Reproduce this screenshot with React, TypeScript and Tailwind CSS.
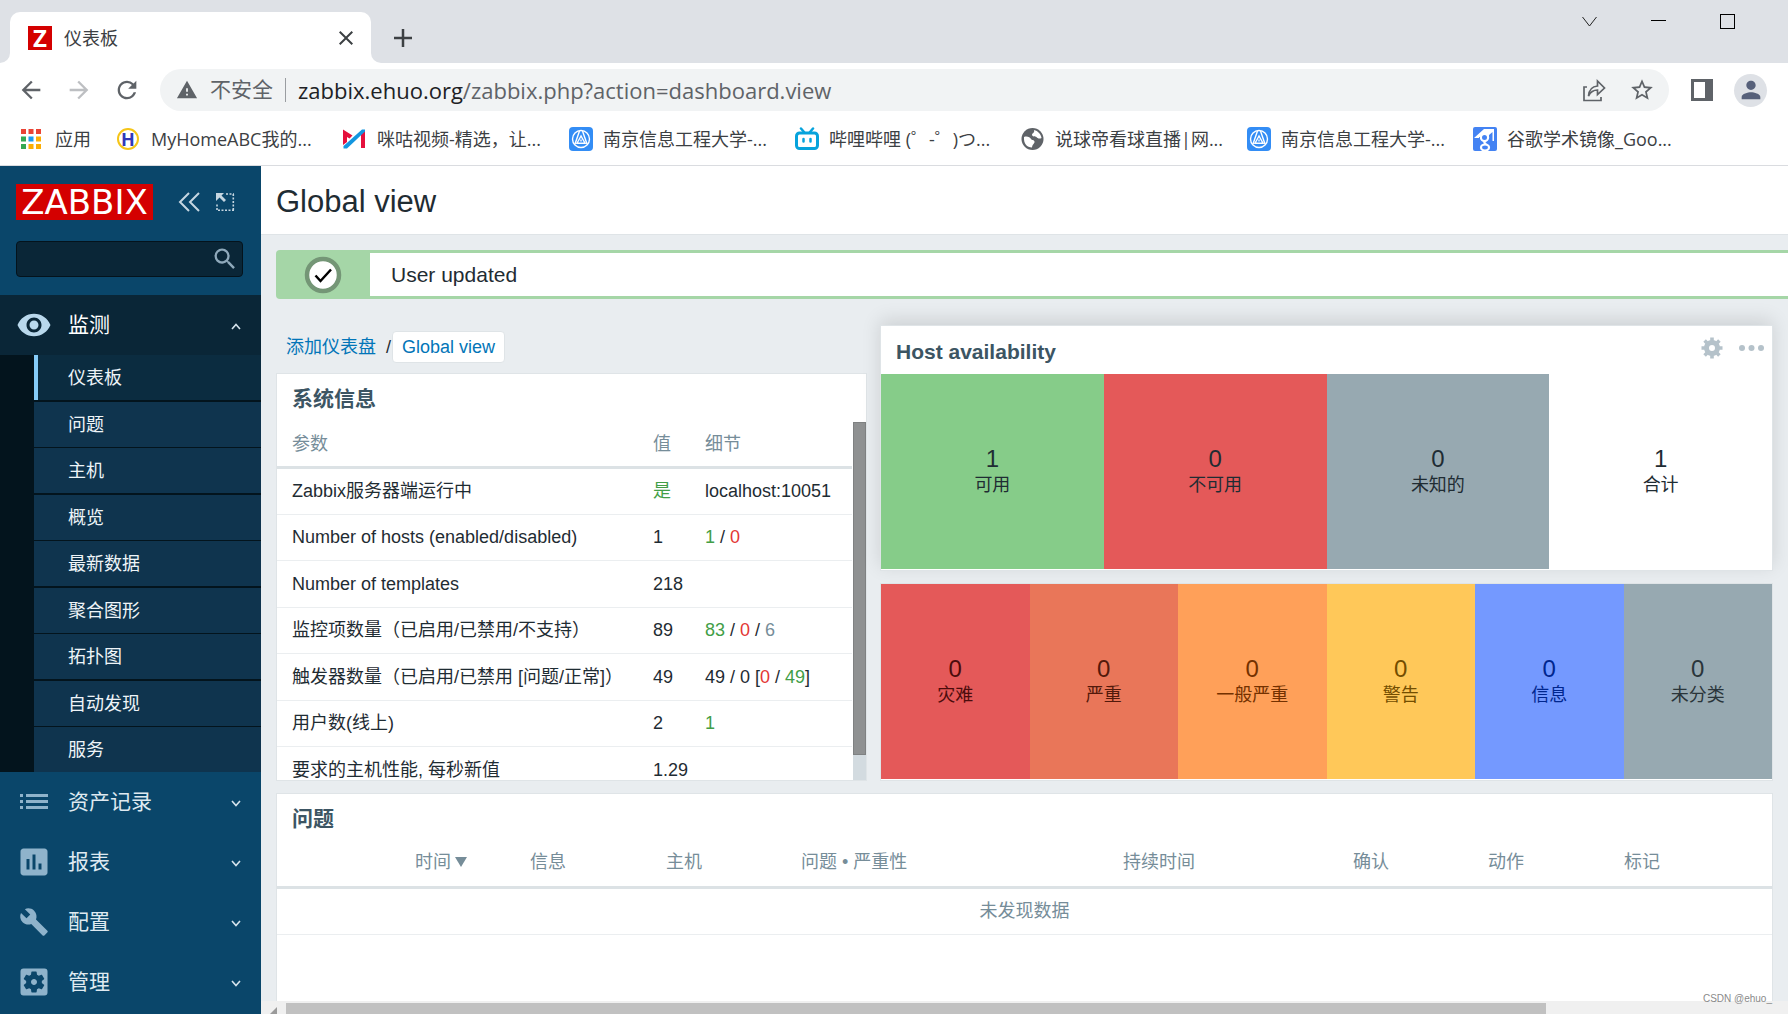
import type { ReactNode } from "react";
import {
  MdArrowBack,
  MdArrowForward,
  MdAssessment,
  MdBuild,
  MdClose,
  MdPerson,
  MdRefresh,
  MdSearch,
  MdSettingsApplications,
  MdStarBorder,
  MdVisibility,
  MdWarning,
} from "react-icons/md";

const subItems = [
  { label: "问题", border: "border-t-2" },
  { label: "主机", border: "border-t" },
  { label: "概览", border: "border-t-2" },
  { label: "最新数据", border: "border-t" },
  { label: "聚合图形", border: "border-t-2" },
  { label: "拓扑图", border: "border-t" },
  { label: "自动发现", border: "border-t-2" },
  { label: "服务", border: "border-t" },
];

const hostTiles = [
  { count: 1, label: "可用", color: "bg-[#86cc89]" },
  { count: 0, label: "不可用", color: "bg-[#e45959]" },
  { count: 0, label: "未知的", color: "bg-[#97a9b1]" },
  { count: 1, label: "合计", color: "bg-white" },
];

const severityTiles = [
  { label: "灾难", color: "bg-[#e45959] text-[#4b0c0c]" },
  { label: "严重", color: "bg-[#e97659] text-[#52190b]" },
  { label: "一般严重", color: "bg-[#ffa059] text-[#733100]" },
  { label: "警告", color: "bg-[#ffc859] text-[#734d00]" },
  { label: "信息", color: "bg-[#7499ff] text-[#00268e]" },
  { label: "未分类", color: "bg-[#97a9b1] text-[#2a353a]" },
];

const green = "text-[#429e47]";
const red = "text-[#e33734]";
const grey = "text-[#768d99]";

const systemRows: { name: string; value: ReactNode; details: ReactNode; height: string }[] = [
  {
    name: "Zabbix服务器端运行中",
    value: <span className={green}>是</span>,
    details: "localhost:10051",
    height: "h-[47px]",
  },
  {
    name: "Number of hosts (enabled/disabled)",
    value: "1",
    details: (
      <>
        <span className={green}>1</span> / <span className={red}>0</span>
      </>
    ),
    height: "h-[46px]",
  },
  { name: "Number of templates", value: "218", details: "", height: "h-[47px]" },
  {
    name: "监控项数量（已启用/已禁用/不支持）",
    value: "89",
    details: (
      <>
        <span className={green}>83</span> / <span className={red}>0</span> /{" "}
        <span className={grey}>6</span>
      </>
    ),
    height: "h-[46px]",
  },
  {
    name: "触发器数量（已启用/已禁用 [问题/正常]）",
    value: "49",
    details: (
      <>
        49 / 0 [<span className={red}>0</span> / <span className={green}>49</span>]
      </>
    ),
    height: "h-[47px]",
  },
  {
    name: "用户数(线上)",
    value: "2",
    details: <span className={green}>1</span>,
    height: "h-[46px]",
  },
  { name: "要求的主机性能, 每秒新值", value: "1.29", details: "", height: "h-[47px]" },
];

const problemColumns = [
  { label: "信息", width: "w-[136px]" },
  { label: "主机", width: "w-[135px]" },
  { label: "问题 • 严重性", width: "w-[322px]" },
  { label: "持续时间", width: "w-[230px]" },
  { label: "确认", width: "w-[135px]" },
  { label: "动作", width: "w-[136px]" },
  { label: "标记", width: "w-[156px]" },
];

function UniversityIcon() {
  return (
    <svg viewBox="0 0 24 24" className="size-6">
      <rect width="24" height="24" rx="4" fill="#338df5" />
      <g fill="none" stroke="#fff" strokeWidth="1.4">
        <circle cx="12" cy="12" r="8.5" />
        <path d="M10.5 4 6 17M13.500 4 18 17M12 9l-4 7.200h8z" />
        <path d="M12 12.500v2" />
      </g>
    </svg>
  );
}

function AppsIcon() {
  const colors = ["#ea4335", "#ea4335", "#ea4335", "#34a853", "#1a9bf0", "#fbae05", "#34a853", "#fbae05", "#fbae05"];
  return (
    <svg viewBox="0 0 20 20" className="size-5">
      {colors.map((c, i) => (
        <rect key={i} x={(i % 3) * 7.5} y={Math.floor(i / 3) * 7.5} width="5" height="5" fill={c} />
      ))}
    </svg>
  );
}

function GearIcon() {
  return (
    <svg viewBox="0 0 22 22" className="size-[22px]" stroke="#b5c2ca" fill="none">
      <circle cx="11" cy="11" r="5.500" strokeWidth="5" />
      <path
        d="M11 .5V4M11 18v3.500M.5 11H4M18 11h3.500M3.600 3.600l2.400 2.400M16 16l2.400 2.400M18.400 3.600 16 6M6 16l-2.400 2.400"
        strokeWidth="3.600"
      />
    </svg>
  );
}

const bookmarks = [
  {
    label: "MyHomeABC我的...",
    icon: (
      <span className="mr-[2px] flex size-[22px] items-center justify-center rounded-full border-2 border-[#f5c518] text-lg leading-none font-bold text-[#3038b8]">
        H
      </span>
    ),
  },
  {
    label: "咪咕视频-精选，让...",
    icon: (
      <svg viewBox="0 0 24 24" className="size-6">
        <path d="M0 2.500l9.500 6-3 3L4 10v5l-4 3z" fill="#e5103c" />
        <path d="M18 7l4-4v18h-4z" fill="#e5103c" />
        <path d="M.5 19 19 2.500h3V4.500L4 21.500H.5z" fill="#1296e0" />
      </svg>
    ),
  },
  { label: "南京信息工程大学-...", icon: <UniversityIcon /> },
  {
    label: "哔哩哔哩 (゜-゜)つ...",
    icon: (
      <svg viewBox="0 0 24 24" className="size-6" fill="none" stroke="#06a3dc" strokeWidth="3">
        <rect x="1.500" y="6" width="21" height="15.500" rx="3" />
        <path d="M6 1.500 9 5M18 1.500 15 5M8.500 12v2.500M15.500 12v2.500" strokeLinecap="round" strokeWidth="2.500" />
      </svg>
    ),
  },
  {
    label: "说球帝看球直播|网...",
    icon: (
      <svg viewBox="0 0 24 24" className="size-6">
        <circle cx="11.500" cy="12" r="11" fill="#5f6368" />
        <path
          d="M3 10c3-1 6 0 7 2 1 1.500 3 .5 3.500 2.500.4 2-2 2.500-2.500 6-5 0-8.500-4-8-10.500z"
          fill="#fff"
        />
        <path d="M13 3c4 1 7 4 7.500 8-2 1-4 .5-5-1-1.500-1-4 0-4.500-2 0-2 3-2 2-5z" fill="#fff" />
      </svg>
    ),
  },
  { label: "南京信息工程大学-...", icon: <UniversityIcon /> },
  {
    label: "谷歌学术镜像_Goo...",
    icon: (
      <svg viewBox="0 0 24 24" className="size-6">
        <rect width="24" height="24" rx="2" fill="#4483f3" />
        <path d="M1 11 11 2h10v12h-1.500V5L16 8v2H6v1z" fill="#fff" />
        <g stroke="#fff" strokeWidth="2.200" fill="#4483f3">
          <circle cx="11.500" cy="10.500" r="3.600" />
          <path d="M13 14c-2.500 1-2 2.500 1 4" fill="none" />
          <ellipse cx="12" cy="20.500" rx="4" ry="3" />
        </g>
      </svg>
    ),
  },
];

function TabStrip() {
  return (
    <div className="flex h-[63px] shrink-0 bg-[#dee1e6]">
      <div className="size-[10px] self-end bg-white">
        <div className="size-full rounded-br-[10px] bg-[#dee1e6]" />
      </div>
      <div className="mt-3 flex w-[361px] items-center rounded-t-[10px] bg-white pr-[13px] pl-[18px] text-[#3c4043]">
        <span className="flex size-6 items-center justify-center bg-[#d40000] text-2xl leading-6 font-bold text-white">
          Z
        </span>
        <span className="ml-3 flex-1 text-lg">仪表板</span>
        <button type="button" aria-label="关闭标签页">
          <MdClose className="size-6" />
        </button>
      </div>
      <div className="size-[10px] self-end bg-white">
        <div className="size-full rounded-bl-[10px] bg-[#dee1e6]" />
      </div>
      <button type="button" aria-label="新标签页" className="mt-3 ml-3">
        <svg viewBox="0 0 20 20" className="size-5" stroke="#3c4043" strokeWidth="2.500">
          <path d="M10 1v18M1 10h18" />
        </svg>
      </button>
      <div className="ml-auto flex h-[42px] items-center gap-[54px] pr-[53px]">
        <button type="button" aria-label="搜索标签页">
          <svg viewBox="0 0 15 15" className="size-[15px]" fill="none" stroke="#222">
            <path d="M.5 3 7.500 12l7-9" />
          </svg>
        </button>
        <button type="button" aria-label="最小化">
          <svg viewBox="0 0 15 15" className="size-[15px]" stroke="#000">
            <path d="M0 6.500h15" />
          </svg>
        </button>
        <button type="button" aria-label="最大化">
          <svg viewBox="0 0 15 15" className="size-[15px]" fill="none" stroke="#000">
            <rect x=".5" y=".5" width="14" height="14" />
          </svg>
        </button>
      </div>
    </div>
  );
}

function Toolbar() {
  return (
    <div className="flex h-[54px] shrink-0 items-center bg-white pr-[21px] pl-[17px] text-[#5f6368]">
      <button type="button" aria-label="后退">
        <MdArrowBack className="size-7" />
      </button>
      <button type="button" aria-label="前进" className="ml-5 text-[#bdbfc2]">
        <MdArrowForward className="size-7" />
      </button>
      <button type="button" aria-label="重新加载" className="ml-5">
        <MdRefresh className="size-7" />
      </button>
      <div className="ml-[19px] flex h-[42px] flex-1 items-center rounded-full bg-[#f1f3f4] pr-[14px] pl-4">
        <MdWarning className="size-[22px]" />
        <span className="ml-3 text-[21px]">不安全</span>
        <span className="mx-3 h-6 w-px bg-[#9a9da1]" />
        <div className="relative min-w-0 flex-1 text-[22px] leading-7">
          <input
            type="text"
            aria-label="地址"
            defaultValue="zabbix.ehuo.org/zabbix.php?action=dashboard.view"
            className="absolute inset-0 w-full bg-transparent text-transparent outline-none"
          />
          {/* host is drawn darker than the path */}
          <div className="pointer-events-none truncate">
            <span className="text-[#202124]">zabbix.ehuo.org</span>
            /zabbix.php?action=dashboard.view
          </div>
        </div>
        <button type="button" aria-label="分享">
          <svg viewBox="0 0 26 26" className="size-[26px]" fill="none" stroke="#5f6368" strokeWidth="1.700">
            <path d="M6 10H3v13.500h17V20" />
            <path d="M7.500 19c.5-5.500 3-9.500 9-10V4l7 7-7 6.500V13c-4 0-7 2-9 6z" />
          </svg>
        </button>
        <button type="button" aria-label="收藏" className="ml-[22px]">
          <MdStarBorder className="size-[26px]" />
        </button>
      </div>
      <button type="button" aria-label="侧边栏" className="ml-[22px]">
        <svg viewBox="0 0 22 22" className="size-[22px]">
          <path d="M0 0h22v22H0zM3 3v16h11V3z" fill="#5f6368" fillRule="evenodd" />
        </svg>
      </button>
      <button
        type="button"
        aria-label="用户"
        className="ml-[21px] flex size-[33px] items-center justify-center rounded-full bg-[#dee1e6] text-[#56607a]"
      >
        <MdPerson className="size-[28px]" />
      </button>
    </div>
  );
}

function Bookmarks() {
  return (
    <nav className="flex h-[49px] shrink-0 items-center overflow-hidden border-b border-[#dadce0] bg-white pb-1 pl-[21px] text-lg whitespace-nowrap text-[#3c4043]">
      <a href="#apps" className="flex w-24 shrink-0 items-center gap-[14px]">
        <AppsIcon />
        应用
      </a>
      {bookmarks.map((b, i) => (
        <a key={i} href="#bookmark" className="flex w-[226px] shrink-0 items-center gap-[10px]">
          {b.icon}
          <span>{b.label}</span>
        </a>
      ))}
    </nav>
  );
}

function Chevron({ up = false }: { up?: boolean }) {
  return (
    <svg viewBox="0 0 10 10" className="ml-auto size-[10px]" fill="none" stroke="#d5e3ec" strokeWidth="1.600">
      <path d={up ? "M1 9l4-4.500L9 9" : "M1 4l4 4.500L9 4"} />
    </svg>
  );
}

function MenuItem({ icon, label }: { icon: ReactNode; label: string }) {
  return (
    <button type="button" className="flex h-[60px] w-full items-center pr-5 text-[21px] text-[#dfeaf1]">
      <span className="flex w-[68px] justify-center text-[#8fb3cb]">{icon}</span>
      {label}
      <Chevron />
    </button>
  );
}

function Sidebar() {
  return (
    <aside className="w-[261px] shrink-0 overflow-hidden bg-[#0a466a]">
      <div className="h-[129px] px-4 pt-[18px]">
        <div className="flex items-center">
          <a
            href="#home"
            className="flex h-9 w-[137px] items-center justify-center bg-[#d40000] font-['DejaVu_Sans'] text-[34px] leading-9 text-white"
          >
            ZABBIX
          </a>
          <button type="button" aria-label="收起" className="ml-6">
            <svg viewBox="0 0 24 20" className="h-5 w-6" fill="none" stroke="#c5d6e1" strokeWidth="2">
              <path d="M12 1 3 10l9 9M22 1l-9 9 9 9" />
            </svg>
          </button>
          <button type="button" aria-label="隐藏" className="ml-[14px]">
            <svg viewBox="0 0 20 20" className="size-5" fill="none" stroke="#c5d6e1" strokeWidth="1.600">
              <path d="M11 2h8M18.300 2v17M19 18.300H2M2 18V11" strokeDasharray="2 1.500" />
              <path d="M1 1h8L6.500 3.500l4.500 4.500-2 2-4.500-4.500L1 9z" fill="#c5d6e1" stroke="none" />
            </svg>
          </button>
        </div>
        <form className="mt-[21px] flex h-9 w-[227px] items-center rounded-sm border border-[#04131c] bg-[#0a2637] pr-[3px]">
          <input
            type="text"
            aria-label="搜索"
            className="min-w-0 flex-1 bg-transparent px-2 text-lg text-white outline-none"
          />
          <button type="button" aria-label="开始搜索" className="text-[#8fa9bb]">
            <MdSearch className="size-7" />
          </button>
        </form>
      </div>

      <button type="button" className="flex h-[60px] w-full items-center bg-[#0a2637] pr-5 text-[21px] text-white">
        <span className="flex w-[68px] justify-center text-[#b9d8ec]">
          <MdVisibility className="size-9" />
        </span>
        监测
        <Chevron up />
      </button>
      <ul className="bg-[#03141d] pl-[34px] text-lg text-[#eef4f8]">
        <li>
          <a
            href="#dashboard"
            className="flex h-[45px] items-center border-l-4 border-[#86ccf8] bg-[#0b2c40] pb-[2px] pl-[30px]"
          >
            仪表板
          </a>
        </li>
        {subItems.map((item) => (
          <li key={item.label} className={`border-[#03141d] ${item.border}`}>
            <a href="#item" className="flex h-[45px] items-center bg-[#0f344e] pb-[2px] pl-[34px]">
              {item.label}
            </a>
          </li>
        ))}
      </ul>
      <MenuItem
        label="资产记录"
        icon={
          <svg viewBox="0 0 28 18" className="h-[18px] w-7" fill="currentColor">
            <path d="M0 1h3v3H0zM6 1h22v3H6zM0 7h3v3H0zM6 7h22v3H6zM0 13h3v3H0zM6 13h22v3H6z" />
          </svg>
        }
      />
      <MenuItem label="报表" icon={<MdAssessment className="size-9" />} />
      <MenuItem label="配置" icon={<MdBuild className="size-[30px]" />} />
      <MenuItem label="管理" icon={<MdSettingsApplications className="size-9" />} />
    </aside>
  );
}

function Tile({ count, label, color }: { count: number; label: string; color: string }) {
  return (
    <a href="#tile" className={`flex flex-1 flex-col items-center justify-center ${color}`}>
      <span className="text-2xl leading-[26px]">{count}</span>
      <span className="text-lg leading-[26px]">{label}</span>
    </a>
  );
}

function SystemInfo() {
  return (
    <section className="flex h-[408px] flex-col overflow-hidden border border-[#dfe4e7] bg-white">
      <h4 className="h-12 shrink-0 px-[15px] text-[21px] leading-[50px] font-bold text-[#3c5563]">系统信息</h4>
      <div className="flex min-h-0 flex-1">
        <div className="mr-px flex-1 overflow-hidden">
          <table className="w-full table-fixed text-left whitespace-nowrap">
            <thead>
              <tr className="h-[45px] border-b-[3px] border-[#dce2e5] text-[#768d99]">
                <th className="w-[368px] pl-[15px] font-normal">参数</th>
                <th className="w-[52px] pl-2 font-normal">值</th>
                <th className="pl-2 font-normal">细节</th>
              </tr>
            </thead>
            <tbody>
              {systemRows.map((row) => (
                <tr key={row.name} className={`border-b border-[#ebeef0] ${row.height}`}>
                  <td className="pl-[15px]">{row.name}</td>
                  <td className="pl-2">{row.value}</td>
                  <td className="pl-2">{row.details}</td>
                </tr>
              ))}
            </tbody>
          </table>
        </div>
        <div className="w-[13px] bg-[#d3dbe0]">
          <div className="h-[333px] border border-[#7f8182] bg-[#8f9192]" />
        </div>
      </div>
    </section>
  );
}

function Problems() {
  return (
    <section className="mx-[15px] mt-3 min-h-0 flex-1 overflow-hidden border border-b-0 border-[#dfe4e7] bg-white">
      <h4 className="h-[45px] px-[15px] text-[21px] leading-[50px] font-bold text-[#3c5563]">问题</h4>
      <table className="w-full table-fixed text-left whitespace-nowrap text-[#768d99]">
        <thead>
          <tr className="h-12 border-b-[3px] border-[#dce2e5]">
            <td className="w-[130px]" />
            <th className="w-[115px] pl-2 font-normal">
              <span className="flex items-center gap-1">
                时间
                <svg viewBox="0 0 12 10" className="h-[10px] w-3" fill="currentColor">
                  <path d="M0 0h12L6 10z" />
                </svg>
              </span>
            </th>
            {problemColumns.map((col) => (
              <th key={col.label} className={`pl-2 font-normal ${col.width}`}>
                {col.label}
              </th>
            ))}
          </tr>
        </thead>
        <tbody>
          <tr className="h-[47px] border-b border-[#ebeef0]">
            <td colSpan={9} className="text-center">
              未发现数据
            </td>
          </tr>
        </tbody>
      </table>
    </section>
  );
}

function Dashboard() {
  return (
    <main className="flex min-w-0 flex-1 flex-col overflow-hidden bg-[#e9edf0] font-['Liberation_Sans','Noto_Sans_CJK_SC',sans-serif] text-lg leading-6 text-[#1f2c33]">
      <header className="h-[69px] shrink-0 border-b border-[#dfe4e7] bg-white px-[15px]">
        <h1 className="text-[31px] leading-[72px]">Global view</h1>
      </header>

      <div className="mt-[15px] ml-[15px] flex h-[49px] shrink-0 rounded-l-sm border-3 border-r-0 border-[#a5d6a7] bg-white text-[21px]">
        <div className="flex w-[91px] items-center justify-center bg-[#a5d6a7] pr-[3px]">
          <svg viewBox="0 0 38 38" className="size-[38px]">
            <circle cx="19" cy="19" r="16" fill="#fff" stroke="#749676" strokeWidth="4.500" />
            <path d="M11.500 19.500l5 5.500L27 13.500" fill="none" stroke="#000" strokeWidth="2.500" />
          </svg>
        </div>
        <span className="self-center pl-[21px]">User updated</span>
      </div>

      <div className="mx-[15px] mt-[26px] grid shrink-0 grid-cols-[591fr_893fr] gap-x-[13px]">
        <div className="flex min-w-0 flex-col pt-[6px]">
          <nav className="mb-[10px] flex h-8 items-center pl-[10px] text-[#0275b8]">
            <a href="#dashboards">添加仪表盘</a>
            <span className="ml-[10px] text-[#1f2c33]">/</span>
            <a
              href="#global"
              className="ml-px flex h-8 items-center rounded-sm border border-[#dfe4e7] bg-white px-[9px]"
            >
              Global view
            </a>
          </nav>
          <SystemInfo />
        </div>

        <div className="flex min-w-0 flex-col gap-3">
          <section className="flex flex-1 flex-col border border-[#dfe4e7] bg-white shadow-[0_-5px_18px_rgba(0,0,0,0.12)]">
            <div className="flex h-12 items-center pr-2 pl-[15px]">
              <h4 className="flex-1 pt-1 text-[21px] font-bold text-[#3c5563]">Host availability</h4>
              <div className="flex items-center gap-4 pb-[5px]">
                <button type="button" aria-label="编辑">
                  <GearIcon />
                </button>
                <button type="button" aria-label="动作">
                  <svg viewBox="0 0 25 6" className="h-[6px] w-[25px]" fill="#b5c2ca">
                    <circle cx="3" cy="3" r="3" />
                    <circle cx="12.500" cy="3" r="3" />
                    <circle cx="22" cy="3" r="3" />
                  </svg>
                </button>
              </div>
            </div>
            <div className="mb-px flex flex-1">
              {hostTiles.map((t) => (
                <Tile key={t.label} {...t} />
              ))}
            </div>
          </section>
          <section className="flex h-[198px] border border-[#dfe4e7] bg-white pb-px">
            {severityTiles.map((t) => (
              <Tile key={t.label} count={0} {...t} />
            ))}
          </section>
        </div>
      </div>

      <Problems />

      <div className="flex h-[13px] shrink-0 items-end bg-[#f0f0f0] pl-[9px]">
        <svg viewBox="0 0 7 7" className="size-[7px]">
          <path d="M7 0v7H0z" fill="#9a9a9a" />
        </svg>
        <div className="ml-[9px] h-[11px] w-[83%] bg-[#c1c1c1]" />
      </div>
    </main>
  );
}

export default function App() {
  return (
    <div className="relative flex h-screen flex-col overflow-hidden font-['Open_Sans','Noto_Sans_CJK_SC',sans-serif]">
      <TabStrip />
      <Toolbar />
      <Bookmarks />
      <div className="flex min-h-0 flex-1">
        <Sidebar />
        <Dashboard />
      </div>
      <span className="absolute right-4 bottom-[7px] font-['Liberation_Sans',sans-serif] text-[10px] leading-4 text-[#8a8a8a]">
        CSDN @ehuo_
      </span>
    </div>
  );
}
